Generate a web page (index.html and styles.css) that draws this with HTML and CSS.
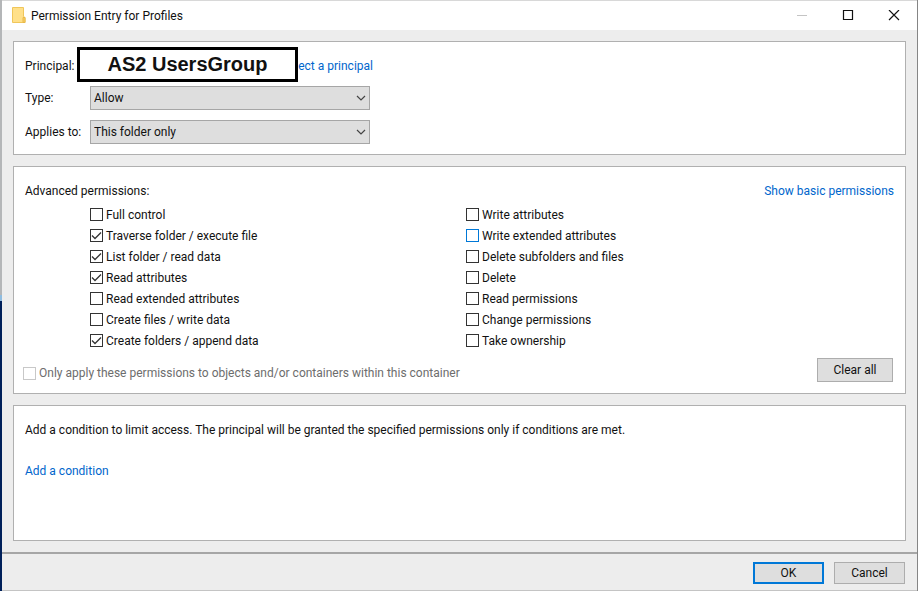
FILE: index.html
```html
<!DOCTYPE html>
<html lang="en">
<head>
<meta charset="utf-8">
<title>Permission Entry for Profiles</title>
<link rel="stylesheet" href="styles.css">
</head>
<body>
<div class="desktop">
<div class="window">
  <header class="titlebar">
    <svg class="folder" width="14" height="18" viewBox="0 0 14 18" aria-hidden="true">
      <path d="M0.500 0.500h11v9l1.500 1v5H0.500z" fill="#ffe08a" stroke="#f0c65a"/>
      <path d="M11 10.500h2v5h-2z" fill="#fcd064" stroke="#e8b94a"/>
    </svg>
    <h1 class="title">Permission Entry for Profiles</h1>
    <button class="win-btn" type="button" aria-label="Minimize" disabled>
      <svg width="12" height="12" viewBox="0 0 12 12"><path d="M1 5.500h10" stroke="#c4c4c4" fill="none"/></svg>
    </button>
    <button class="win-btn" type="button" aria-label="Maximize">
      <svg width="12" height="12" viewBox="0 0 12 12"><path d="M1.500 0.500h9v9h-9z" stroke="#111" stroke-width="1.200" fill="none"/></svg>
    </button>
    <button class="win-btn" type="button" aria-label="Close">
      <svg width="12" height="12" viewBox="0 0 12 12"><path d="M1 0l10 10M11 0L1 10" stroke="#111" stroke-width="1.200" fill="none"/></svg>
    </button>
  </header>

  <main class="content">
    <section class="panel entry">
      <div class="field first">
        <span class="field-name">Principal:</span>
        <div class="principal">
          <a class="link" href="#principal">Select a principal</a>
          <strong class="cover">AS2 UsersGroup</strong>
        </div>
      </div>
      <div class="field">
        <label class="field-name" for="type">Type:</label>
        <div class="select-wrap">
          <select id="type"><option>Allow</option><option>Deny</option></select>
          <svg class="chevron" width="10" height="6" viewBox="0 0 10 6" aria-hidden="true"><path d="M1 1l4 4 4-4" stroke="#444" stroke-width="1.200" fill="none"/></svg>
        </div>
      </div>
      <div class="field">
        <label class="field-name" for="applies">Applies to:</label>
        <div class="select-wrap">
          <select id="applies"><option>This folder only</option></select>
          <svg class="chevron" width="10" height="6" viewBox="0 0 10 6" aria-hidden="true"><path d="M1 1l4 4 4-4" stroke="#444" stroke-width="1.200" fill="none"/></svg>
        </div>
      </div>
    </section>

    <section class="panel permissions">
      <div class="panel-head">
        <h2 class="heading">Advanced permissions:</h2>
        <a class="link" href="#basic">Show basic permissions</a>
      </div>
      <div class="columns">
        <div class="column">
          <label class="check"><input type="checkbox">Full control</label>
          <label class="check"><input type="checkbox" checked>Traverse folder / execute file</label>
          <label class="check"><input type="checkbox" checked>List folder / read data</label>
          <label class="check"><input type="checkbox" checked>Read attributes</label>
          <label class="check"><input type="checkbox">Read extended attributes</label>
          <label class="check"><input type="checkbox">Create files / write data</label>
          <label class="check"><input type="checkbox" checked>Create folders / append data</label>
        </div>
        <div class="column">
          <label class="check"><input type="checkbox">Write attributes</label>
          <label class="check"><input type="checkbox" class="hot">Write extended attributes</label>
          <label class="check"><input type="checkbox">Delete subfolders and files</label>
          <label class="check"><input type="checkbox">Delete</label>
          <label class="check"><input type="checkbox">Read permissions</label>
          <label class="check"><input type="checkbox">Change permissions</label>
          <label class="check"><input type="checkbox">Take ownership</label>
        </div>
      </div>
      <div class="panel-foot">
        <label class="check muted"><input type="checkbox" disabled>Only apply these permissions to objects and/or containers within this container</label>
        <button class="btn wide" type="button">Clear all</button>
      </div>
    </section>

    <section class="panel condition">
      <p class="note">Add a condition to limit access. The principal will be granted the specified permissions only if conditions are met.</p>
      <a class="link" href="#condition">Add a condition</a>
    </section>
  </main>

  <footer class="actions">
    <button class="btn primary" type="button">OK</button>
    <button class="btn" type="button">Cancel</button>
  </footer>
</div>
</div>
</body>
</html>
```
FILE: styles.css
```css
* { box-sizing: border-box; }

body {
  margin: 0;
  font-family: Roboto, "Open Sans", sans-serif;
  font-size: 12px;
  line-height: 16px;
  color: #111;
}

.desktop {
  min-height: 100vh;
  display: flex;
  padding: 0 1px 0 2px;
  background: linear-gradient(to right, transparent 2px, #858585 2px),
              linear-gradient(#b4b6b8 0 50%, #8fbce0 50% 51%, #00205a 51%);
}

.window {
  flex: 1;
  display: flex;
  flex-direction: column;
  background: #ededed;
  border-top: 1px solid #d8d8d8;
  border-bottom: 1px solid #c4c4c4;
}

.titlebar {
  display: flex;
  align-items: center;
  height: 29px;
  padding-left: 10px;
  background: #fff;
}

.title {
  flex: 1;
  margin: 0 0 0 5px;
  font-size: 12px;
  font-weight: 400;
}

.win-btn {
  width: 46px;
  height: 28px;
  padding: 0;
  border: 0;
  background: none;
}

.win-btn svg { display: block; margin: 0 auto; }

.content {
  flex: 1;
  display: flex;
  flex-direction: column;
  gap: 11px;
  padding: 11px;
}

.panel {
  background: #fff;
  border: 1px solid #b0b0b0;
  padding: 11px;
}

.entry {
  display: flex;
  flex-direction: column;
  gap: 10px;
  padding: 10px 11px;
}

.field {
  display: flex;
  align-items: center;
  height: 24px;
}

.first { padding-top: 4px; }

.field-name { width: 65px; }

.principal {
  position: relative;
  width: 283px;
  text-align: right;
}

.cover {
  position: absolute;
  left: -13px;
  top: -11px;
  width: 221px;
  height: 35px;
  border: 3px solid #000;
  background: #fff;
  color: #111;
  font: bold 20px/29px "Liberation Sans", sans-serif;
  text-align: center;
}

.link { color: #0066cc; text-decoration: none; }

.select-wrap { position: relative; width: 280px; }

select {
  display: block;
  appearance: none;
  width: 100%;
  height: 24px;
  padding: 0 3px;
  border: 1px solid #a6a6a6;
  border-radius: 0;
  background: #dedede;
  font: inherit;
  color: inherit;
}

.chevron {
  position: absolute;
  right: 4px;
  top: 9px;
  pointer-events: none;
}

.permissions { padding: 16px 11px 11px; }

.panel-head { display: flex; justify-content: space-between; }

.heading { margin: 0; font-size: 12px; font-weight: 400; }

.columns {
  display: grid;
  grid-template-columns: 376px 1fr;
  margin: 5px 0 0 65px;
}

.column { display: flex; flex-direction: column; align-items: flex-start; }

.check {
  display: flex;
  align-items: center;
  gap: 3px;
  height: 21px;
}

.check input {
  appearance: none;
  width: 13px;
  height: 13px;
  margin: 0;
  border: 1px solid #333;
  background: #fff;
}

.check input:checked {
  background: url("data:image/svg+xml,%3Csvg xmlns='http://www.w3.org/2000/svg' viewBox='0 0 11 11'%3E%3Cpath d='M1 5.500l3 3L10 2.500' fill='none' stroke='%23333' stroke-width='1.300'/%3E%3C/svg%3E");
}

.check .hot { border-color: #0078d7; }

.muted { color: #6d6d6d; }

.muted input:disabled { border-color: #c8c8c8; }

.panel-foot {
  display: flex;
  justify-content: space-between;
  align-items: flex-end;
  margin: 7px 1px 0 -2px;
}

.panel-foot .check { height: 18px; }

.btn {
  width: 71px;
  height: 22px;
  padding: 0;
  border: 1px solid #adadad;
  background: #dedede;
  font: inherit;
  color: inherit;
}

.btn.wide { width: 76px; height: 24px; }

.primary { border: 2px solid #0078d7; }

.condition { flex: 1; padding-top: 16px; }

.note { margin: 0 0 25px; }

.actions {
  display: flex;
  justify-content: flex-end;
  gap: 10px;
  padding: 8px 12px 6px;
  border-top: 2px solid #a6a6a6;
}
```
